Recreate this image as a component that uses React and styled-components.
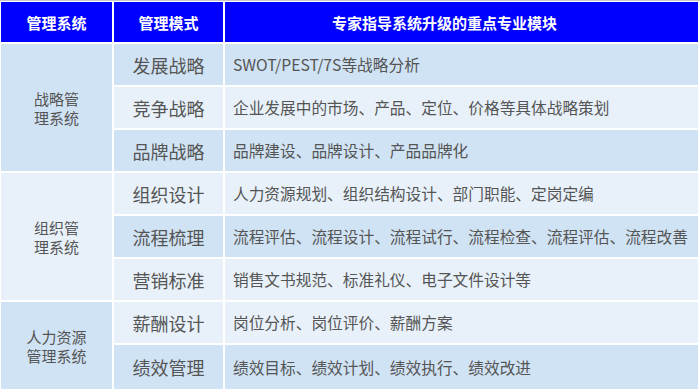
import React from "react";
import styled, { createGlobalStyle } from "styled-components";

const GlobalStyle = createGlobalStyle`
  html, body {
    margin: 0;
    padding: 0;
    background: #fff;
  }
  body {
    font-family: "Noto Sans CJK SC", "Noto Sans", sans-serif;
  }
`;

const Table = styled.div`
  display: grid;
  grid-template-columns: 111px 109px 1fr;
  grid-template-rows: 40px repeat(7, 41px) 44px;
  gap: 2px;
  width: 700px;
  height: 389px;
  box-sizing: border-box;
  padding: 1px 2px 0 1px;
  border-top: 1px solid #c9c9c9;
  background: #fff;
  overflow: hidden;
`;

const HeadCell = styled.div`
  background: #0000ff;
  color: #fff;
  font-size: 15px;
  font-weight: 700;
  display: flex;
  align-items: center;
  justify-content: center;
  padding-right: ${(p) => p.$shift || 0}px;
`;

const GroupCell = styled.div`
  grid-row: span ${(p) => p.$span};
  background: ${(p) => (p.$dark ? "#d0e3f4" : "#e8f1fa")};
  color: #555;
  font-size: 15px;
  line-height: 19px;
  display: flex;
  align-items: center;
  justify-content: center;
  text-align: center;
`;

const ModeCell = styled.div`
  grid-column: 2;
  background: ${(p) => (p.$dark ? "#d0e3f4" : "#e8f1fa")};
  color: #555;
  font-size: 18px;
  display: flex;
  align-items: center;
  justify-content: center;
`;

const DescCell = styled.div`
  background: ${(p) => (p.$dark ? "#d0e3f4" : "#e8f1fa")};
  color: #555;
  font-size: 15.7px;
  display: flex;
  align-items: center;
  padding-left: 8px;
  white-space: nowrap;
`;

const groups = [
  {
    name: ["战略管", "理系统"],
    dark: true,
    rows: [
      ["发展战略", "SWOT/PEST/7S等战略分析", true],
      ["竞争战略", "企业发展中的市场、产品、定位、价格等具体战略策划", false],
      ["品牌战略", "品牌建设、品牌设计、产品品牌化", true],
    ],
  },
  {
    name: ["组织管", "理系统"],
    dark: false,
    rows: [
      ["组织设计", "人力资源规划、组织结构设计、部门职能、定岗定编", false],
      ["流程梳理", "流程评估、流程设计、流程试行、流程检查、流程评估、流程改善", true],
      ["营销标准", "销售文书规范、标准礼仪、电子文件设计等", false],
    ],
  },
  {
    name: ["人力资源", "管理系统"],
    dark: true,
    rows: [
      ["薪酬设计", "岗位分析、岗位评价、薪酬方案", false],
      ["绩效管理", "绩效目标、绩效计划、绩效执行、绩效改进", true],
    ],
  },
];

export default function App() {
  return (
    <>
      <GlobalStyle />
      <Table>
        <HeadCell>管理系统</HeadCell>
        <HeadCell>管理模式</HeadCell>
        <HeadCell $shift={34}>专家指导系统升级的重点专业模块</HeadCell>
        {groups.map((g) => (
          <React.Fragment key={g.name.join("")}>
            <GroupCell $span={g.rows.length} $dark={g.dark}>
              {g.name[0]}
              <br />
              {g.name[1]}
            </GroupCell>
            {g.rows.map(([mode, desc, dark]) => (
              <React.Fragment key={mode}>
                <ModeCell $dark={dark}>{mode}</ModeCell>
                <DescCell $dark={dark}>{desc}</DescCell>
              </React.Fragment>
            ))}
          </React.Fragment>
        ))}
      </Table>
    </>
  );
}
